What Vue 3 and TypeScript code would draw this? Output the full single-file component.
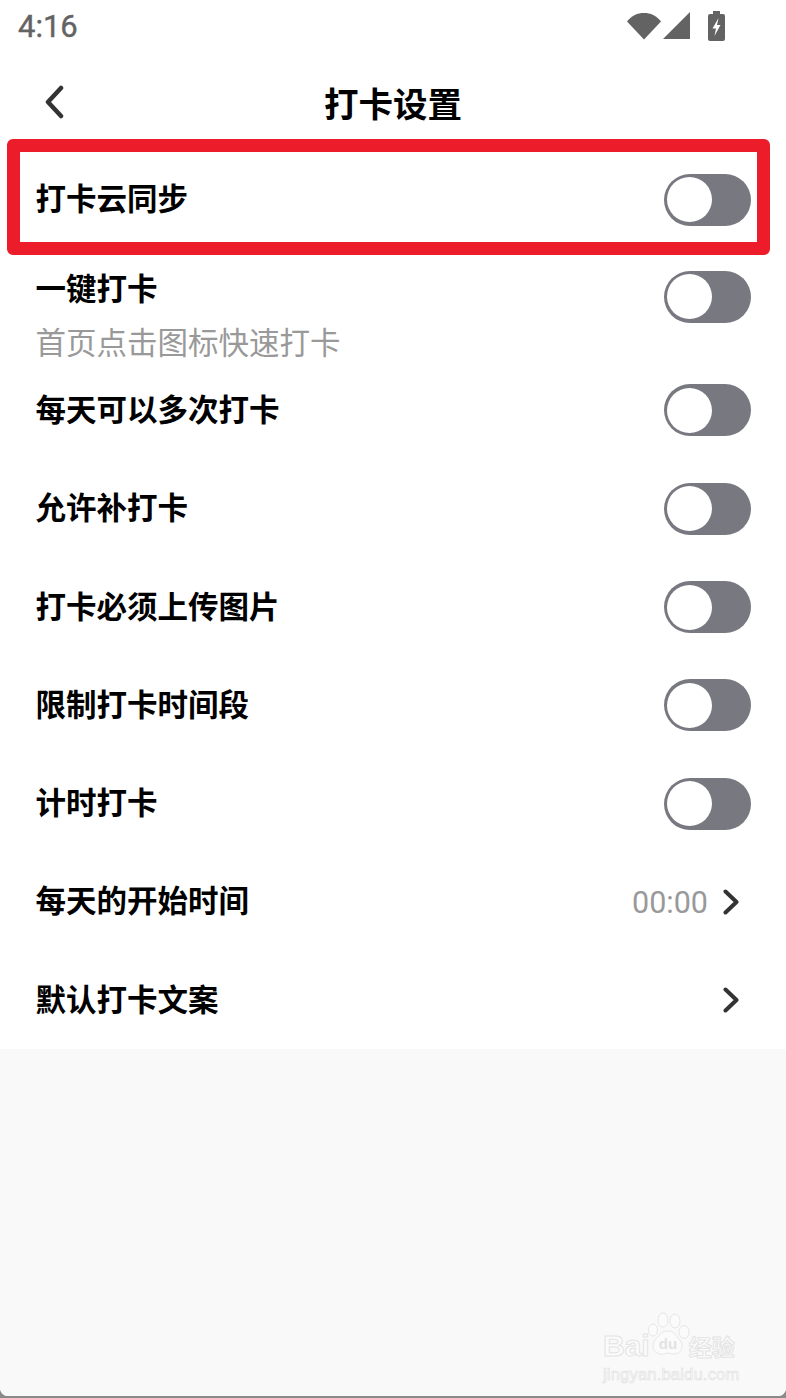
<template>
  <div class="page">
    <div class="screen">
      <div class="top">
        <div class="status-bar">
          <span class="clock">4:16</span>
          <div class="status-icons">
            <svg width="34" height="28" viewBox="0 0 34 28">
              <path d="M0 9.500C4.500 3.500 10.500 1 17 1s12.500 2.500 17 8.500L17 27.500z" fill="#636363" />
            </svg>
            <svg width="27" height="27" viewBox="0 0 27 27">
              <path d="M27 0v27H0z" fill="#636363" />
            </svg>
            <svg class="battery" width="17" height="30" viewBox="0 0 17 30">
              <path d="M5 0h7v3h3a2 2 0 0 1 2 2v23a2 2 0 0 1-2 2H2a2 2 0 0 1-2-2V5a2 2 0 0 1 2-2h3z" fill="#636363" />
              <path d="M10.500 7L4.500 17.500h3.500L6.500 25l6-11H9z" fill="#fff" />
            </svg>
          </div>
        </div>
        <header class="nav">
          <svg class="back" width="22" height="34" viewBox="0 0 22 34">
            <path d="M18 3L5 17l13 14" fill="none" stroke="#333" stroke-width="4.500" stroke-linecap="round" stroke-linejoin="round" />
          </svg>
          <h1>打卡设置</h1>
        </header>
      </div>

      <ul class="list">
        <li v-for="row in rows" :key="row.title" class="row" :class="{ tall: row.sub }">
          <div class="text">
            <span class="title">{{ row.title }}</span>
            <span v-if="row.sub" class="sub">{{ row.sub }}</span>
          </div>
          <div v-if="row.toggle" class="toggle"><i class="knob" /></div>
          <div v-else class="value">
            <span v-if="row.value" class="time">{{ row.value }}</span>
            <svg width="16" height="26" viewBox="0 0 16 26">
              <path d="M2.500 2.500L13.500 13 2.500 23.500" fill="none" stroke="#333" stroke-width="4" stroke-linecap="round" stroke-linejoin="round" />
            </svg>
          </div>
        </li>
      </ul>

      <div class="rest" />
    </div>

    <div class="highlight" />

    <div class="watermark">
      <div class="wm-main">
        <span class="wm-bai">Bai</span>
        <svg class="wm-paw" width="42" height="46" viewBox="0 0 42 46">
          <g fill="#fbfbfb" stroke="#e6e6e6" stroke-width="1">
            <ellipse cx="5" cy="18" rx="4.500" ry="6" />
            <ellipse cx="15" cy="8" rx="5" ry="7" />
            <ellipse cx="27" cy="9" rx="5" ry="7" />
            <ellipse cx="36" cy="20" rx="5" ry="6.500" />
            <path d="M20 19c6 0 8 5 12 9 4 5 2 14-6 14-3 0-4-1-6-1s-4 2-8 1c-7-1-9-9-5-14 4-4 6-9 13-9z" />
          </g>
          <text x="20" y="37" class="wm-du">du</text>
        </svg>
        <span class="wm-cn">经验</span>
      </div>
      <div class="wm-url">jingyan.baidu.com</div>
    </div>
  </div>
</template>

<script setup lang="ts">
interface SettingRow {
  title: string
  sub?: string
  toggle?: boolean
  value?: string
}

const rows: SettingRow[] = [
  { title: '打卡云同步', toggle: true },
  { title: '一键打卡', sub: '首页点击图标快速打卡', toggle: true },
  { title: '每天可以多次打卡', toggle: true },
  { title: '允许补打卡', toggle: true },
  { title: '打卡必须上传图片', toggle: true },
  { title: '限制打卡时间段', toggle: true },
  { title: '计时打卡', toggle: true },
  { title: '每天的开始时间', value: '00:00' },
  { title: '默认打卡文案' },
]
</script>

<style>
html,
body {
  margin: 0;
  background: #fff;
}
</style>

<style scoped>
.page {
  position: relative;
  width: 786px;
  height: 1398px;
  overflow: hidden;
  background: #8a8a8a;
  font-family: "Noto Sans CJK SC", "Noto Sans", sans-serif;
}

.screen {
  display: flex;
  flex-direction: column;
  height: 1396px;
  border-radius: 0 0 8px 8px;
  overflow: hidden;
  background: #fff;
}

.top {
  height: 150.5px;
  flex: none;
}

.status-bar {
  display: flex;
  align-items: flex-start;
  justify-content: space-between;
  height: 54px;
  padding: 0 61px 0 18px;
}

.clock {
  margin-top: 9px;
  font-family: Roboto, sans-serif;
  font-size: 31px;
  line-height: 36px;
  color: #636363;
  -webkit-text-stroke: 0.4px #636363;
}

.status-icons {
  display: flex;
  align-items: flex-start;
  gap: 2px;
  padding: 12px 0 0 1px;
}

.battery {
  margin: -1px 0 0 16px;
}

.nav {
  position: relative;
  display: flex;
  justify-content: center;
  padding-top: 23px;
}

.back {
  position: absolute;
  left: 43px;
  top: 31px;
}

h1 {
  margin: 0;
  font-size: 34.500px;
  line-height: 50px;
  font-weight: 700;
  color: #000;
}

.list {
  flex: none;
  margin: 0;
  padding: 0;
  list-style: none;
}

.row {
  display: flex;
  align-items: center;
  justify-content: space-between;
  height: 98.3px;
  padding: 0 35px 0 36px;
}

.row.tall {
  align-items: flex-start;
  height: 112.500px;
  padding-top: 20px;
  box-sizing: border-box;
}

.row.tall .toggle {
  margin-top: 2px;
}

.text {
  display: flex;
  flex-direction: column;
  padding-bottom: 5px;
  margin-left: -0.500px;
}

.title {
  font-size: 30.500px;
  line-height: 36px;
  font-weight: 700;
  color: #000;
}

.sub {
  margin-top: 18px;
  font-size: 30.500px;
  line-height: 36px;
  color: #999;
}

.toggle {
  display: flex;
  align-items: center;
  width: 87px;
  height: 52px;
  padding-left: 3px;
  box-sizing: border-box;
  border-radius: 26px;
  background: #787880;
}

.knob {
  display: block;
  width: 45px;
  height: 45px;
  border-radius: 50%;
  background: #fff;
}

.value {
  display: flex;
  align-items: center;
  gap: 15px;
  font-family: Roboto, sans-serif;
  font-size: 30.500px;
  color: #999;
}

.time {
  padding-top: 2px;
}

.value svg {
  margin-right: 12px;
}

.rest {
  flex: 1;
  background: #f9f9f9;
}

.highlight {
  position: absolute;
  left: 7px;
  top: 139px;
  width: 763px;
  height: 116px;
  box-sizing: border-box;
  border: 13px solid #ed1c2b;
  border-radius: 6px;
}

.watermark {
  position: absolute;
  left: 603px;
  top: 1313px;
  width: 140px;
  color: #fbfbfb;
  font-family: "Liberation Sans", sans-serif;
}

.wm-main {
  display: flex;
  align-items: flex-end;
  height: 45px;
}

.wm-bai {
  font-size: 30px;
  line-height: 24px;
  font-weight: 700;
  -webkit-text-stroke: 1px #e4e4e4;
}

.wm-paw {
  flex: none;
  margin-left: -2px;
}

.wm-du {
  font-size: 15px;
  font-weight: 700;
  text-anchor: middle;
  fill: #e2e2e2;
}

.wm-cn {
  margin-left: -1px;
  font-family: "Noto Sans CJK SC", sans-serif;
  font-size: 23px;
  line-height: 24px;
  font-weight: 700;
  -webkit-text-stroke: 1px #e4e4e4;
  white-space: nowrap;
}

.wm-url {
  margin-top: 6px;
  font-size: 16.500px;
  line-height: 20px;
  letter-spacing: 0.2px;
  -webkit-text-stroke: 0.6px #e0e0e0;
  white-space: nowrap;
}
</style>
